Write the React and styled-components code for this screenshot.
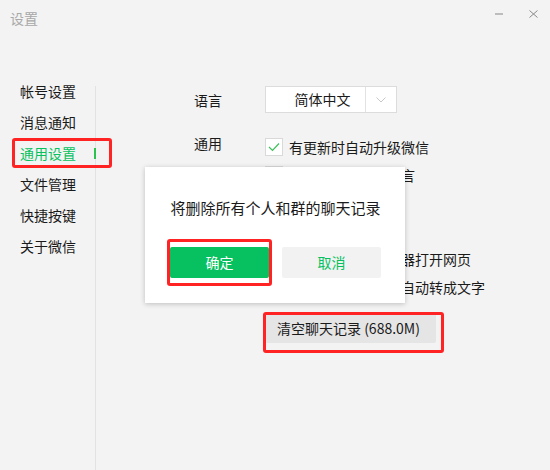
import styled, { createGlobalStyle } from 'styled-components'

const GlobalStyle = createGlobalStyle`
  body {
    margin: 0;
    background: #f3f3f3;
    font-family: "Noto Sans CJK SC", "Noto Sans", sans-serif;
  }
`

const Window = styled.div`
  position: relative;
  width: 550px;
  height: 470px;
  background: #f3f3f3;
  overflow: hidden;
`

const TitleBar = styled.div`
  height: 36px;
  display: flex;
  align-items: center;
  padding-left: 10px;
`

const Title = styled.div`
  flex: 1;
  font-size: 14px;
  color: #a8a8a8;
`

const WinButton = styled.div`
  width: 34px;
  height: 36px;
  display: flex;
  justify-content: center;
  align-items: center;
  margin-top: -9px;
`

const Body = styled.div`
  display: flex;
  margin-top: 40px;
`

const Nav = styled.div`
  position: relative;
  width: 96px;
  flex-shrink: 0;

  &::after {
    content: "";
    position: absolute;
    right: 0;
    top: 10px;
    width: 1px;
    height: 400px;
    background: #e2e2e2;
  }
`

const NavItem = styled.div`
  position: relative;
  height: 31px;
  line-height: 31px;
  padding-left: 20px;
  font-size: 14px;
  color: ${p => (p.active ? '#07c160' : '#1a1a1a')};

  &::after {
    content: "";
    display: ${p => (p.active ? 'block' : 'none')};
    position: absolute;
    right: 0;
    top: 10px;
    width: 2px;
    height: 11px;
    background: #2bc24d;
    z-index: 1;
  }
`

const Highlight = styled.div`
  position: absolute;
  top: ${p => p.t}px;
  left: ${p => p.l}px;
  right: ${p => p.r}px;
  bottom: ${p => p.b}px;
  border: 3px solid #ff2323;
  border-radius: 3px;
  pointer-events: none;
  z-index: 5;
`

const Content = styled.div`
  flex: 1;
  padding: 10px 0 0 98px;
`

const Row = styled.div`
  display: flex;
  align-items: ${p => p.align || 'center'};
  margin-bottom: ${p => p.mb || 0}px;
`

const Label = styled.div`
  width: 71px;
  flex-shrink: 0;
  font-size: 14px;
  line-height: 20px;
  color: #1a1a1a;
`

const Select = styled.div`
  display: flex;
  width: 132px;
  height: 27px;
  box-sizing: border-box;
  border: 1px solid #dcdcdc;
  background: #fff;
`

const SelectValue = styled.div`
  flex: 1;
  padding-left: 14px;
  text-align: center;
  font-size: 14px;
  line-height: 25px;
  color: #1a1a1a;
  border-right: 1px solid #e2e2e2;
`

const SelectArrow = styled.div`
  width: 30px;
  display: flex;
  justify-content: center;
  align-items: center;
`

const Options = styled.div`
  display: flex;
  flex-direction: column;
  align-items: flex-start;
`

const Option = styled.div`
  height: 28px;
  display: flex;
  align-items: center;
  gap: 6px;
  font-size: 14px;
  color: #1a1a1a;
`

const Check = styled.div`
  width: 18px;
  height: 18px;
  box-sizing: border-box;
  border: 1px solid #d9d9d9;
  background: #fff;
  display: flex;
  justify-content: center;
  align-items: center;
`

const ButtonWrap = styled.div`
  position: relative;
  display: inline-block;
`

const ClearButton = styled.div`
  width: 171px;
  height: 30px;
  margin-top: 12px;
  border-radius: 2px;
  background: #e5e5e5;
  font-size: 14px;
  line-height: 30px;
  padding-left: 12px;
  box-sizing: border-box;
  color: #1a1a1a;
`

const Dialog = styled.div`
  position: absolute;
  left: 145px;
  top: 167px;
  width: 260px;
  height: 136px;
  box-sizing: border-box;
  padding: 30px 24px 0 25px;
  background: #fff;
  box-shadow: 0 1px 5px rgba(0, 0, 0, 0.22);
  z-index: 3;
`

const DialogText = styled.div`
  font-size: 15px;
  line-height: 22px;
  text-align: center;
  color: #1a1a1a;
`

const DialogButtons = styled.div`
  display: flex;
  gap: 13px;
  margin-top: 28px;
`

const DialogButton = styled.div`
  width: 99px;
  height: 31px;
  border-radius: 2px;
  text-align: center;
  font-size: 14px;
  line-height: 31px;
  background: ${p => (p.primary ? '#07c160' : '#f2f2f2')};
  color: ${p => (p.primary ? '#fff' : '#07c160')};
`

const CheckMark = () => (
  <svg width="12" height="10" viewBox="0 0 12 10">
    <polyline points="1,5 4.5,8.5 11,1.5" fill="none" stroke="#3cc15a" strokeWidth="1.2" />
  </svg>
)

const options = [
  { text: '有更新时自动升级微信', checked: true },
  { text: '消息翻译为当前语言' },
  { text: '保留聊天记录' },
  { text: '开启声音' },
  { text: '使用系统默认浏览器打开网页' },
  { text: '聊天中的语音消息自动转成文字' },
]

const navItems = ['帐号设置', '消息通知', '通用设置', '文件管理', '快捷按键', '关于微信']

const App = () => {
  return (
    <Window>
      <GlobalStyle />
      <TitleBar>
        <Title>设置</Title>
        <WinButton>
          <svg width="8" height="2"><rect width="8" height="2" fill="#bdbdbd" /></svg>
        </WinButton>
        <WinButton>
          <svg width="9" height="8" viewBox="0 0 9 8">
            <path d="M0.5 0.5 L8.5 7.5 M8.5 0.5 L0.5 7.5" stroke="#8a8a8a" strokeWidth="1" />
          </svg>
        </WinButton>
      </TitleBar>

      <Body>
        <Nav>
          {navItems.map(item => (
            <NavItem key={item} active={item === '通用设置'}>
              {item}
              {item === '通用设置' && <Highlight t={0} l={12} r={-16} b={1} />}
            </NavItem>
          ))}
        </Nav>

        <Content>
          <Row mb={20}>
            <Label>语言</Label>
            <Select>
              <SelectValue>简体中文</SelectValue>
              <SelectArrow>
                <svg width="10" height="6" viewBox="0 0 10 6">
                  <polyline points="0.5,0.5 5,5 9.5,0.5" fill="none" stroke="#c8c8c8" strokeWidth="1" />
                </svg>
              </SelectArrow>
            </Select>
          </Row>

          <Row align="flex-start">
            <Label>通用</Label>
            <Options>
              {options.map(o => (
                <Option key={o.text}>
                  <Check>{o.checked && <CheckMark />}</Check>
                  {o.text}
                </Option>
              ))}
              <ButtonWrap>
                <ClearButton>清空聊天记录 (688.0M)</ClearButton>
                <Highlight t={11} l={-2} r={-8} b={-10} />
              </ButtonWrap>
            </Options>
          </Row>
        </Content>
      </Body>

      <Dialog>
        <DialogText>将删除所有个人和群的聊天记录</DialogText>
        <DialogButtons>
          <ButtonWrap>
            <DialogButton primary>确定</DialogButton>
            <Highlight t={-8} l={-3} r={-3} b={-8} />
          </ButtonWrap>
          <DialogButton>取消</DialogButton>
        </DialogButtons>
      </Dialog>
    </Window>
  )
}

export default App
